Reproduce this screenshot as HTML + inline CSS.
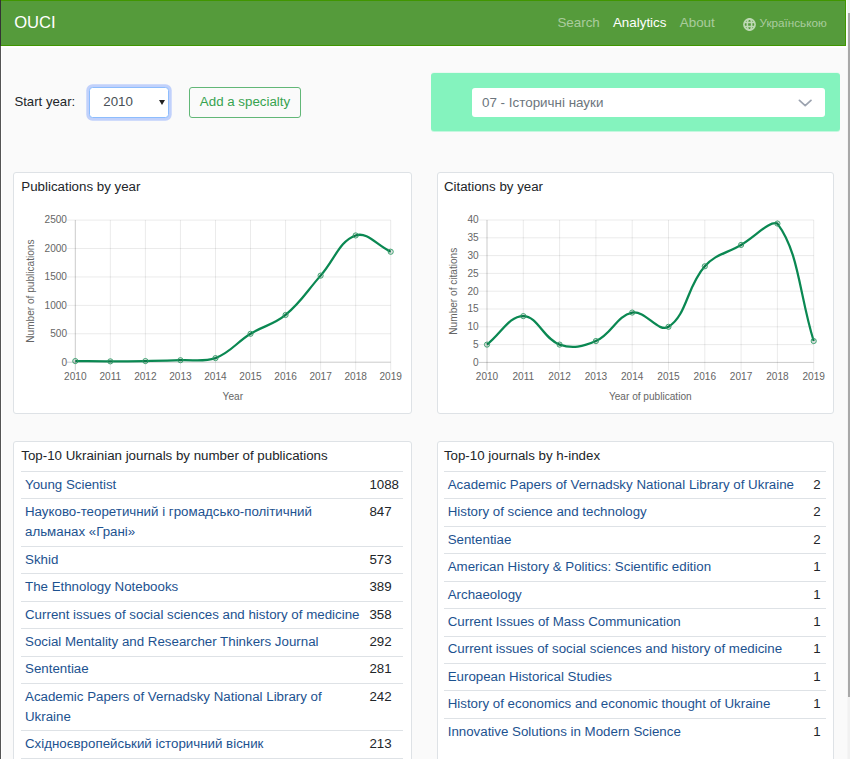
<!DOCTYPE html>
<html lang="en"><head><meta charset="utf-8"><title>OUCI - Analytics</title>
<style>
*{box-sizing:border-box}
html,body{margin:0;padding:0}
body{width:850px;height:759px;overflow:hidden;position:relative;background:#fff;font-family:"Liberation Sans",Arial,sans-serif;font-size:13.32px;line-height:19.92px;color:#212529}
.abs{position:absolute}
#edge{left:0;top:0;width:1px;height:759px;background:#555}
#page{left:2px;top:48px;width:845px;height:711px;background:#fafafa}
#nav{left:1px;top:0;width:845px;height:46px;background:#559b3b;border-top:1px solid #409600;border-bottom:1px solid #409600;border-right:1px solid #409600}
#edge2{left:0;top:0;width:1px;height:46px;background:#333}
#brand{left:14.2px;top:12px;font-size:16.6px;line-height:22px;color:#fff}
.nl{top:12.5px;font-size:13.4px;line-height:20px;color:rgba(255,255,255,.5);white-space:nowrap}
.nl.act{color:#fff}
#sb{left:848px;top:0;width:2px;height:759px;background:#f1f1f1;box-shadow:-1px 0 0 #f5f5f5}
#sbt{left:848px;top:13px;width:2px;height:684px;background:#a8a8a8}
#lbl{left:14.4px;top:92px;font-size:13.2px;white-space:nowrap}
#sel{left:89px;top:87px;width:80px;height:31px;border:1px solid #8dbdfd;border-radius:3.5px;background:#fff;box-shadow:0 0 0 2.7px rgba(40,100,255,.27);color:#495057}
#sel span{position:absolute;left:13.3px;top:3.6px}
#sel i{position:absolute;left:69px;top:11.5px;width:0;height:0;border-left:3px solid transparent;border-right:3px solid transparent;border-top:5.6px solid #222}
#btn{left:189px;top:87px;width:112px;height:31px;border:1px solid #62b777;border-radius:3px;color:#36a34f;text-align:center;line-height:28px;white-space:nowrap}
#mint{left:431px;top:73px;width:409px;height:58px;background:#84f3be;border-radius:3px;box-shadow:0 1px 0 rgba(132,243,190,.45), 0 -1px 0 rgba(132,243,190,.12)}
#msel{left:472px;top:88px;width:353px;height:29px;background:#fff;border-radius:3px;color:#6c757d;font-size:13.4px}
#msel span{position:absolute;left:10px;top:4.5px;white-space:nowrap}
.card{background:#fff;border:1px solid #dee2e6;border-radius:3px}
.ct{position:absolute;left:7.3px;top:4.1px;white-space:nowrap}
svg.full{position:absolute;left:0;top:0;width:850px;height:759px;pointer-events:none}
.tk{font-family:"Liberation Sans",Arial,sans-serif;font-size:10.1px;fill:#666}
table{position:absolute;left:7px;top:28.9px;border-collapse:collapse;width:382px}
td{border-top:1px solid #dee2e6;padding:2.9px 4px 3.556px 4px;vertical-align:top;line-height:20px}
td a{color:#1c5290;text-decoration:none}
td.n{color:#212529}
</style></head><body>
<div class="abs" id="edge"></div>
<div class="abs" id="page"></div>
<div class="abs" id="nav"></div>
<div class="abs" id="edge2"></div>
<div class="abs" id="brand">OUCI</div>
<div class="abs nl" style="left:557.4px">Search</div>
<div class="abs nl act" style="left:612.9px">Analytics</div>
<div class="abs nl" style="left:679.8px">About</div>
<svg class="abs" style="left:742.5px;top:17.5px;opacity:.62" width="13" height="13" viewBox="0 0 24 24" fill="none" stroke="#fff" stroke-width="3"><circle cx="12" cy="12" r="10.3"/><ellipse cx="12" cy="12" rx="4" ry="10.3"/><path d="M3 8.3h18M3 15.7h18"/></svg>
<div class="abs nl" style="left:759.5px;font-size:11.7px;top:13px">Українською</div>
<div class="abs" id="sb"></div><div class="abs" id="sbt"></div>

<div class="abs" id="lbl">Start year:</div>
<div class="abs" id="sel"><span>2010</span><i></i></div>
<div class="abs" id="btn">Add a specialty</div>
<div class="abs" id="mint"></div>
<div class="abs" id="msel"><span>07 - Історичні науки</span>
<svg style="position:absolute;left:325.8px;top:10.6px" width="14.4" height="8.64" viewBox="0 0 15 9" fill="none" stroke="#9ca3af" stroke-width="1.8" stroke-linecap="round" stroke-linejoin="round"><path d="M1.5 1.5 L7.5 7 L13.5 1.5"/></svg></div>

<div class="abs card" style="left:13px;top:171.5px;width:398.5px;height:242px"><div class="ct">Publications by year</div></div>
<div class="abs card" style="left:436.5px;top:171.5px;width:397.5px;height:242px"><div class="ct" style="left:6.4px">Citations by year</div></div>
<svg class="full" viewBox="0 0 850 759">
<line x1="75.30" y1="220.10" x2="75.30" y2="370.50" stroke="rgba(0,0,0,0.25)" stroke-width="0.83"/>
<text x="75.30" y="379.80" text-anchor="middle" class="tk">2010</text>
<line x1="110.34" y1="220.10" x2="110.34" y2="370.50" stroke="rgba(0,0,0,0.1)" stroke-width="0.83"/>
<text x="110.34" y="379.80" text-anchor="middle" class="tk">2011</text>
<line x1="145.39" y1="220.10" x2="145.39" y2="370.50" stroke="rgba(0,0,0,0.1)" stroke-width="0.83"/>
<text x="145.39" y="379.80" text-anchor="middle" class="tk">2012</text>
<line x1="180.43" y1="220.10" x2="180.43" y2="370.50" stroke="rgba(0,0,0,0.1)" stroke-width="0.83"/>
<text x="180.43" y="379.80" text-anchor="middle" class="tk">2013</text>
<line x1="215.48" y1="220.10" x2="215.48" y2="370.50" stroke="rgba(0,0,0,0.1)" stroke-width="0.83"/>
<text x="215.48" y="379.80" text-anchor="middle" class="tk">2014</text>
<line x1="250.52" y1="220.10" x2="250.52" y2="370.50" stroke="rgba(0,0,0,0.1)" stroke-width="0.83"/>
<text x="250.52" y="379.80" text-anchor="middle" class="tk">2015</text>
<line x1="285.57" y1="220.10" x2="285.57" y2="370.50" stroke="rgba(0,0,0,0.1)" stroke-width="0.83"/>
<text x="285.57" y="379.80" text-anchor="middle" class="tk">2016</text>
<line x1="320.61" y1="220.10" x2="320.61" y2="370.50" stroke="rgba(0,0,0,0.1)" stroke-width="0.83"/>
<text x="320.61" y="379.80" text-anchor="middle" class="tk">2017</text>
<line x1="355.66" y1="220.10" x2="355.66" y2="370.50" stroke="rgba(0,0,0,0.1)" stroke-width="0.83"/>
<text x="355.66" y="379.80" text-anchor="middle" class="tk">2018</text>
<line x1="390.70" y1="220.10" x2="390.70" y2="370.50" stroke="rgba(0,0,0,0.1)" stroke-width="0.83"/>
<text x="390.70" y="379.80" text-anchor="middle" class="tk">2019</text>
<line x1="67.00" y1="362.20" x2="390.70" y2="362.20" stroke="rgba(0,0,0,0.25)" stroke-width="0.83"/>
<text x="67.00" y="365.50" text-anchor="end" class="tk">0</text>
<line x1="67.00" y1="333.78" x2="390.70" y2="333.78" stroke="rgba(0,0,0,0.1)" stroke-width="0.83"/>
<text x="67.00" y="337.08" text-anchor="end" class="tk">500</text>
<line x1="67.00" y1="305.36" x2="390.70" y2="305.36" stroke="rgba(0,0,0,0.1)" stroke-width="0.83"/>
<text x="67.00" y="308.66" text-anchor="end" class="tk">1000</text>
<line x1="67.00" y1="276.94" x2="390.70" y2="276.94" stroke="rgba(0,0,0,0.1)" stroke-width="0.83"/>
<text x="67.00" y="280.24" text-anchor="end" class="tk">1500</text>
<line x1="67.00" y1="248.52" x2="390.70" y2="248.52" stroke="rgba(0,0,0,0.1)" stroke-width="0.83"/>
<text x="67.00" y="251.82" text-anchor="end" class="tk">2000</text>
<line x1="67.00" y1="220.10" x2="390.70" y2="220.10" stroke="rgba(0,0,0,0.1)" stroke-width="0.83"/>
<text x="67.00" y="223.40" text-anchor="end" class="tk">2500</text>
<path d="M75.30 361.06 C89.32 361.18 96.33 361.35 110.34 361.35 C124.36 361.35 131.37 361.29 145.39 361.06 C159.41 360.84 166.43 360.80 180.43 360.21 C194.46 359.62 202.82 362.20 215.48 358.11 C230.86 352.31 236.01 342.71 250.52 333.78 C264.05 325.45 273.51 324.97 285.57 314.97 C301.54 301.71 306.68 291.44 320.61 275.63 C334.71 259.63 339.40 240.98 355.66 235.45 C367.44 231.43 376.68 245.23 390.70 251.76" fill="none" stroke="#0a8852" stroke-width="2.25" stroke-linecap="butt" stroke-linejoin="miter"/>
<circle cx="75.30" cy="361.06" r="2.6" fill="rgba(0,0,0,0.1)" stroke="#2f9c66" stroke-width="0.9"/>
<circle cx="110.34" cy="361.35" r="2.6" fill="rgba(0,0,0,0.1)" stroke="#2f9c66" stroke-width="0.9"/>
<circle cx="145.39" cy="361.06" r="2.6" fill="rgba(0,0,0,0.1)" stroke="#2f9c66" stroke-width="0.9"/>
<circle cx="180.43" cy="360.21" r="2.6" fill="rgba(0,0,0,0.1)" stroke="#2f9c66" stroke-width="0.9"/>
<circle cx="215.48" cy="358.11" r="2.6" fill="rgba(0,0,0,0.1)" stroke="#2f9c66" stroke-width="0.9"/>
<circle cx="250.52" cy="333.78" r="2.6" fill="rgba(0,0,0,0.1)" stroke="#2f9c66" stroke-width="0.9"/>
<circle cx="285.57" cy="314.97" r="2.6" fill="rgba(0,0,0,0.1)" stroke="#2f9c66" stroke-width="0.9"/>
<circle cx="320.61" cy="275.63" r="2.6" fill="rgba(0,0,0,0.1)" stroke="#2f9c66" stroke-width="0.9"/>
<circle cx="355.66" cy="235.45" r="2.6" fill="rgba(0,0,0,0.1)" stroke="#2f9c66" stroke-width="0.9"/>
<circle cx="390.70" cy="251.76" r="2.6" fill="rgba(0,0,0,0.1)" stroke="#2f9c66" stroke-width="0.9"/>
<text transform="translate(30.20 291.15) rotate(-90)" text-anchor="middle" class="tk" y="3.5">Number of publications</text>
<text x="232.80" y="399.70" text-anchor="middle" class="tk">Year</text>
<line x1="487.00" y1="220.00" x2="487.00" y2="370.70" stroke="rgba(0,0,0,0.25)" stroke-width="0.83"/>
<text x="487.00" y="380.00" text-anchor="middle" class="tk">2010</text>
<line x1="523.30" y1="220.00" x2="523.30" y2="370.70" stroke="rgba(0,0,0,0.1)" stroke-width="0.83"/>
<text x="523.30" y="380.00" text-anchor="middle" class="tk">2011</text>
<line x1="559.60" y1="220.00" x2="559.60" y2="370.70" stroke="rgba(0,0,0,0.1)" stroke-width="0.83"/>
<text x="559.60" y="380.00" text-anchor="middle" class="tk">2012</text>
<line x1="595.90" y1="220.00" x2="595.90" y2="370.70" stroke="rgba(0,0,0,0.1)" stroke-width="0.83"/>
<text x="595.90" y="380.00" text-anchor="middle" class="tk">2013</text>
<line x1="632.20" y1="220.00" x2="632.20" y2="370.70" stroke="rgba(0,0,0,0.1)" stroke-width="0.83"/>
<text x="632.20" y="380.00" text-anchor="middle" class="tk">2014</text>
<line x1="668.50" y1="220.00" x2="668.50" y2="370.70" stroke="rgba(0,0,0,0.1)" stroke-width="0.83"/>
<text x="668.50" y="380.00" text-anchor="middle" class="tk">2015</text>
<line x1="704.80" y1="220.00" x2="704.80" y2="370.70" stroke="rgba(0,0,0,0.1)" stroke-width="0.83"/>
<text x="704.80" y="380.00" text-anchor="middle" class="tk">2016</text>
<line x1="741.10" y1="220.00" x2="741.10" y2="370.70" stroke="rgba(0,0,0,0.1)" stroke-width="0.83"/>
<text x="741.10" y="380.00" text-anchor="middle" class="tk">2017</text>
<line x1="777.40" y1="220.00" x2="777.40" y2="370.70" stroke="rgba(0,0,0,0.1)" stroke-width="0.83"/>
<text x="777.40" y="380.00" text-anchor="middle" class="tk">2018</text>
<line x1="813.70" y1="220.00" x2="813.70" y2="370.70" stroke="rgba(0,0,0,0.1)" stroke-width="0.83"/>
<text x="813.70" y="380.00" text-anchor="middle" class="tk">2019</text>
<line x1="478.70" y1="362.40" x2="813.70" y2="362.40" stroke="rgba(0,0,0,0.25)" stroke-width="0.83"/>
<text x="478.70" y="365.70" text-anchor="end" class="tk">0</text>
<line x1="478.70" y1="344.60" x2="813.70" y2="344.60" stroke="rgba(0,0,0,0.1)" stroke-width="0.83"/>
<text x="478.70" y="347.90" text-anchor="end" class="tk">5</text>
<line x1="478.70" y1="326.80" x2="813.70" y2="326.80" stroke="rgba(0,0,0,0.1)" stroke-width="0.83"/>
<text x="478.70" y="330.10" text-anchor="end" class="tk">10</text>
<line x1="478.70" y1="309.00" x2="813.70" y2="309.00" stroke="rgba(0,0,0,0.1)" stroke-width="0.83"/>
<text x="478.70" y="312.30" text-anchor="end" class="tk">15</text>
<line x1="478.70" y1="291.20" x2="813.70" y2="291.20" stroke="rgba(0,0,0,0.1)" stroke-width="0.83"/>
<text x="478.70" y="294.50" text-anchor="end" class="tk">20</text>
<line x1="478.70" y1="273.40" x2="813.70" y2="273.40" stroke="rgba(0,0,0,0.1)" stroke-width="0.83"/>
<text x="478.70" y="276.70" text-anchor="end" class="tk">25</text>
<line x1="478.70" y1="255.60" x2="813.70" y2="255.60" stroke="rgba(0,0,0,0.1)" stroke-width="0.83"/>
<text x="478.70" y="258.90" text-anchor="end" class="tk">30</text>
<line x1="478.70" y1="237.80" x2="813.70" y2="237.80" stroke="rgba(0,0,0,0.1)" stroke-width="0.83"/>
<text x="478.70" y="241.10" text-anchor="end" class="tk">35</text>
<line x1="478.70" y1="220.00" x2="813.70" y2="220.00" stroke="rgba(0,0,0,0.1)" stroke-width="0.83"/>
<text x="478.70" y="223.30" text-anchor="end" class="tk">40</text>
<path d="M487.00 344.60 C501.52 333.21 508.78 316.12 523.30 316.12 C537.82 316.12 543.38 339.03 559.60 344.60 C572.42 349.00 583.08 346.70 595.90 341.04 C612.12 333.88 616.46 315.65 632.20 312.56 C645.50 309.95 658.16 333.39 668.50 326.80 C687.20 314.88 686.61 286.79 704.80 266.28 C715.65 254.04 726.58 253.46 741.10 244.92 C755.62 236.38 769.99 220.00 777.40 223.56 C799.03 252.20 799.18 294.05 813.70 341.04" fill="none" stroke="#0a8852" stroke-width="2.25" stroke-linecap="butt" stroke-linejoin="miter"/>
<circle cx="487.00" cy="344.60" r="2.6" fill="rgba(0,0,0,0.1)" stroke="#2f9c66" stroke-width="0.9"/>
<circle cx="523.30" cy="316.12" r="2.6" fill="rgba(0,0,0,0.1)" stroke="#2f9c66" stroke-width="0.9"/>
<circle cx="559.60" cy="344.60" r="2.6" fill="rgba(0,0,0,0.1)" stroke="#2f9c66" stroke-width="0.9"/>
<circle cx="595.90" cy="341.04" r="2.6" fill="rgba(0,0,0,0.1)" stroke="#2f9c66" stroke-width="0.9"/>
<circle cx="632.20" cy="312.56" r="2.6" fill="rgba(0,0,0,0.1)" stroke="#2f9c66" stroke-width="0.9"/>
<circle cx="668.50" cy="326.80" r="2.6" fill="rgba(0,0,0,0.1)" stroke="#2f9c66" stroke-width="0.9"/>
<circle cx="704.80" cy="266.28" r="2.6" fill="rgba(0,0,0,0.1)" stroke="#2f9c66" stroke-width="0.9"/>
<circle cx="741.10" cy="244.92" r="2.6" fill="rgba(0,0,0,0.1)" stroke="#2f9c66" stroke-width="0.9"/>
<circle cx="777.40" cy="223.56" r="2.6" fill="rgba(0,0,0,0.1)" stroke="#2f9c66" stroke-width="0.9"/>
<circle cx="813.70" cy="341.04" r="2.6" fill="rgba(0,0,0,0.1)" stroke="#2f9c66" stroke-width="0.9"/>
<text transform="translate(453.70 291.20) rotate(-90)" text-anchor="middle" class="tk" y="3.5">Number of citations</text>
<text x="650.30" y="399.90" text-anchor="middle" class="tk">Year of publication</text>
</svg>
<div class="abs card" style="left:13px;top:441px;width:398.5px;height:340px"><div class="ct">Top-10 Ukrainian journals by number of publications</div>
<table style="">
<tr><td><a>Young Scientist</a></td><td class="n" style="width:37.5px">1088</td></tr>
<tr><td><a>Науково-теоретичний і громадсько-політичний<br>альманах «Грані»</a></td><td class="n" style="width:37.5px">847</td></tr>
<tr><td><a>Skhid</a></td><td class="n" style="width:37.5px">573</td></tr>
<tr><td><a>The Ethnology Notebooks</a></td><td class="n" style="width:37.5px">389</td></tr>
<tr><td><a>Current issues of social sciences and history of medicine</a></td><td class="n" style="width:37.5px">358</td></tr>
<tr><td><a>Social Mentality and Researcher Thinkers Journal</a></td><td class="n" style="width:37.5px">292</td></tr>
<tr><td><a>Sententiae</a></td><td class="n" style="width:37.5px">281</td></tr>
<tr><td><a>Academic Papers of Vernadsky National Library of<br>Ukraine</a></td><td class="n" style="width:37.5px">242</td></tr>
<tr><td><a>Східноєвропейський історичний вісник</a></td><td class="n" style="width:37.5px">213</td></tr>
<tr><td><a>&nbsp;</a></td><td class="n" style="width:37.5px">&nbsp;</td></tr>
</table>
</div>
<div class="abs card" style="left:436.5px;top:441px;width:397.5px;height:340px"><div class="ct" style="left:6.4px">Top-10 journals by h-index</div>
<table style="left:6.2px;width:382.5px">
<tr><td><a>Academic Papers of Vernadsky National Library of Ukraine</a></td><td class="n" style="width:17px">2</td></tr>
<tr><td><a>History of science and technology</a></td><td class="n" style="width:17px">2</td></tr>
<tr><td><a>Sententiae</a></td><td class="n" style="width:17px">2</td></tr>
<tr><td><a>American History &amp; Politics: Scientific edition</a></td><td class="n" style="width:17px">1</td></tr>
<tr><td><a>Archaeology</a></td><td class="n" style="width:17px">1</td></tr>
<tr><td><a>Current Issues of Mass Communication</a></td><td class="n" style="width:17px">1</td></tr>
<tr><td><a>Current issues of social sciences and history of medicine</a></td><td class="n" style="width:17px">1</td></tr>
<tr><td><a>European Historical Studies</a></td><td class="n" style="width:17px">1</td></tr>
<tr><td><a>History of economics and economic thought of Ukraine</a></td><td class="n" style="width:17px">1</td></tr>
<tr><td><a>Innovative Solutions in Modern Science</a></td><td class="n" style="width:17px">1</td></tr>
</table>
</div>
</body></html>
